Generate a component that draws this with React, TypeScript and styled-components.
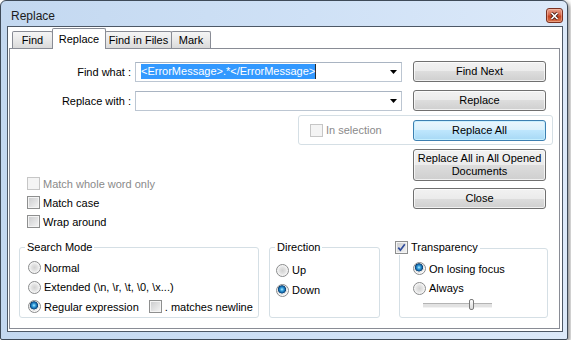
import React from "react";
import styled, { createGlobalStyle } from "styled-components";

const GlobalStyle = createGlobalStyle`
  html, body {
    margin: 0;
    padding: 0;
    background: #ffffff;
  }
  body {
    font-family: "Liberation Sans", Arial, sans-serif;
    font-size: 11px;
    color: #000000;
  }
  * {
    box-sizing: border-box;
  }
`;

const Window = styled.div`
  width: 568px;
  height: 340px;
  display: flex;
  flex-direction: column;
  padding: 0 4px 7px 6px;
  border: 1px solid #3e4a58;
  border-radius: 6px 6px 2px 2px;
  background: linear-gradient(to right, #c3d8f0 0%, #cfe1f6 55%, #dce9f9 100%);
  box-shadow: 2px 2px 4px rgba(0, 0, 0, 0.45);
`;

const TitleBar = styled.div`
  flex: none;
  height: 25px;
  display: flex;
  align-items: center;
  padding: 4px 0 0 4px;
  font-size: 12px;
  color: #1b1b1b;
`;

const CloseButton = styled.div`
  margin-left: auto;
  width: 17px;
  height: 15px;
  display: flex;
  align-items: center;
  justify-content: center;
  border: 1px solid #7a3122;
  border-radius: 3px;
  background: linear-gradient(#eaa48f 0%, #d6654a 45%, #c6421f 55%, #d9774f 100%);
  box-shadow: inset 0 0 0 1px rgba(255, 210, 190, 0.45);
`;

const Client = styled.div`
  flex: 1;
  display: flex;
  flex-direction: column;
  border: 1px solid #4d5866;
  background: #ffffff;
  padding: 0 2px 2px 1px;
`;

const TabStrip = styled.div`
  flex: none;
  height: 21px;
  display: flex;
  align-items: flex-end;
  padding-left: 3px;
`;

const Tab = styled.div<{ $active?: boolean; $w: number }>`
  position: relative;
  z-index: ${(p) => (p.$active ? 2 : 1)};
  width: ${(p) => p.$w}px;
  height: ${(p) => (p.$active ? 21 : 17)}px;
  margin-left: -1px;
  margin-bottom: ${(p) => (p.$active ? -1 : 0)}px;
  display: flex;
  align-items: center;
  justify-content: center;
  border: 1px solid #898c95;
  border-bottom: none;
  border-radius: 2px 2px 0 0;
  background: ${(p) =>
    p.$active
      ? "#ffffff"
      : "linear-gradient(#f5f5f5 0%, #e9e9e9 50%, #dadada 100%)"};
  &:first-child {
    margin-left: 0;
  }
`;

const Panel = styled.div`
  flex: 1;
  display: flex;
  flex-direction: column;
  border: 1px solid #898c95;
  background: #ffffff;
  padding: 0 13px 0 0;
`;

const FieldRow = styled.div<{ $top: number }>`
  display: flex;
  align-items: center;
  height: 21px;
  margin-top: ${(p) => p.$top}px;
`;

const FieldLabel = styled.div`
  flex: none;
  width: 121px;
  text-align: right;
`;

const Combo = styled.div`
  flex: none;
  width: 267px;
  height: 20px;
  margin-left: 4px;
  display: flex;
  align-items: center;
  padding: 0 4px 0 5px;
  border: 1px solid #bcc6d2;
  border-top-color: #a9b4c2;
  background: #ffffff;
`;

const Highlight = styled.span`
  height: 15px;
  line-height: 15px;
  background: #3399ff;
  color: #ffffff;
  border-right: 1px solid #2a2a2a;
`;

const Arrow = styled.svg`
  margin-left: auto;
  flex: none;
`;

const Button = styled.button<{ $default?: boolean; $h?: number; $push?: boolean }>`
  flex: none;
  width: 133px;
  height: ${(p) => p.$h ?? 21}px;
  margin-left: ${(p) => (p.$push ? "auto" : "0")};
  padding: 0 2px;
  font: inherit;
  line-height: 13px;
  color: #000000;
  border: 1px solid ${(p) => (p.$default ? "#3c7fb1" : "#707070")};
  border-radius: 3px;
  background: ${(p) =>
    p.$default
      ? "linear-gradient(#eaf6fd 0%, #d9f0fc 50%, #bee6fd 50%, #a7d9f5 100%)"
      : "linear-gradient(#f2f2f2 0%, #ebebeb 50%, #dddddd 50%, #cfcfcf 100%)"};
  box-shadow: inset 0 0 0 1px
    ${(p) => (p.$default ? "rgba(200, 240, 255, 0.9)" : "rgba(255, 255, 255, 0.7)")};
`;

const SelectionBox = styled.div`
  width: 255px;
  height: 30px;
  margin: 4px 0 0 288px;
  display: flex;
  align-items: center;
  justify-content: space-between;
  padding: 0 6px 0 11px;
  border: 1px solid #d5dfe5;
  border-radius: 3px;
`;

const MiddleRow = styled.div`
  display: flex;
  align-items: flex-start;
  margin-top: 4px;
`;

const Options = styled.div`
  display: flex;
  flex-direction: column;
  padding: 25px 0 0 17px;
`;

const SideButtons = styled.div`
  margin-left: auto;
  display: flex;
  flex-direction: column;
  gap: 7px;
`;

const OptionRow = styled.div<{ $disabled?: boolean; $h?: number }>`
  display: flex;
  align-items: center;
  gap: 3px;
  height: ${(p) => p.$h ?? 19}px;
  color: ${(p) => (p.$disabled ? "#8a8a8a" : "#000000")};
  white-space: nowrap;
`;

const Spacer = styled.span<{ $w: number }>`
  flex: none;
  width: ${(p) => p.$w}px;
`;

const Box = styled.span<{ $disabled?: boolean }>`
  flex: none;
  width: 13px;
  height: 13px;
  display: inline-flex;
  align-items: center;
  justify-content: center;
  border: 1px solid ${(p) => (p.$disabled ? "#c6c6c6" : "#8e8f8f")};
  background: ${(p) =>
    p.$disabled ? "#f4f4f4" : "linear-gradient(135deg, #c9cacc 0%, #f5f5f5 100%)"};
  box-shadow: inset 0 0 0 1px #f4f4f4;
`;

const Dot = styled.span<{ $on?: boolean }>`
  flex: none;
  width: 13px;
  height: 13px;
  border-radius: 50%;
  border: 1px solid #8a8b8c;
  background: ${(p) =>
    p.$on
      ? "radial-gradient(circle at 45% 40%, #b9eeff 0, #3ca6e2 1.5px, #115f9e 3.2px, #0b3f70 3.8px, #eeeeee 4.4px, #dedede 5px, #fafafa 5.6px)"
      : "radial-gradient(circle at 50% 50%, #d2d2d2 0, #e2e2e2 3px, #efefef 4.5px, #fafafa 5.6px)"};
`;

const BottomRow = styled.div`
  display: flex;
  align-items: flex-start;
  margin-top: 10px;
  padding-left: 9px;
`;

const Group = styled.fieldset<{ $w: number; $gap: number }>`
  flex: none;
  width: ${(p) => p.$w}px;
  min-width: 0;
  height: 77px;
  margin: 0 0 0 ${(p) => p.$gap}px;
  padding: 0;
  border: 1px solid #d5dfe5;
  border-radius: 3px;
`;

const Caption = styled.legend<{ $shift?: number }>`
  margin-left: ${(p) => p.$shift ?? 5}px;
  padding: 0 2px;
  line-height: 13px;
`;

const CaptionInner = styled.span`
  display: inline-flex;
  align-items: center;
  gap: 3px;
`;

const GroupBody = styled.div<{ $top: number; $left: number }>`
  display: flex;
  flex-direction: column;
  padding: ${(p) => p.$top}px 0 0 ${(p) => p.$left}px;
`;

const Slider = styled.div`
  position: relative;
  width: 69px;
  height: 11px;
  margin: 1px 0 0 10px;
  &::before {
    content: "";
    position: absolute;
    left: 0;
    right: 0;
    top: 4px;
    height: 3px;
    border-top: 1px solid #b4b4b4;
    border-bottom: 1px solid #f2f2f2;
    background: #e2e2e2;
  }
`;

const Thumb = styled.span`
  position: absolute;
  top: 0;
  width: 5px;
  height: 11px;
  border: 1px solid #7b7b7b;
  border-radius: 2px;
  background: linear-gradient(#ffffff, #d8d8d8);
`;

const CheckMark = () => (
  <svg width="9" height="9" viewBox="0 0 9 9">
    <path d="M1.3 4.6 L3.4 7.2 L7.8 1.2" fill="none" stroke="#2f4c9c" strokeWidth="1.7" />
  </svg>
);

const Checkbox = ({
  label,
  disabled,
  checked,
}: {
  label: string;
  disabled?: boolean;
  checked?: boolean;
}) => (
  <OptionRow $disabled={disabled}>
    <Box $disabled={disabled}>{checked && <CheckMark />}</Box>
    {label}
  </OptionRow>
);

const Radio = ({ label, on, h }: { label: React.ReactNode; on?: boolean; h?: number }) => (
  <OptionRow $h={h}>
    <Dot $on={on} />
    {label}
  </OptionRow>
);

const DropArrow = () => (
  <Arrow width="7" height="4" viewBox="0 0 7 4">
    <polygon points="0,0 7,0 3.5,4" fill="#000000" />
  </Arrow>
);

const App = () => {
  const sliderPos = 46;
  return (
    <>
      <GlobalStyle />
      <Window>
        <TitleBar>
          Replace
          <CloseButton>
            <svg width="9" height="8" viewBox="0 0 9 8" style={{ overflow: "visible" }}>
              <path d="M1.5 1 L7.5 7 M7.5 1 L1.5 7" stroke="#4a1a12" strokeWidth="3.2" />
              <path d="M1.5 1 L7.5 7 M7.5 1 L1.5 7" stroke="#ffffff" strokeWidth="1.7" />
            </svg>
          </CloseButton>
        </TitleBar>
        <Client>
          <TabStrip>
            <Tab $w={41}>Find</Tab>
            <Tab $w={54} $active>
              Replace
            </Tab>
            <Tab $w={67}>Find in Files</Tab>
            <Tab $w={40}>Mark</Tab>
          </TabStrip>
          <Panel>
            <FieldRow $top={12}>
              <FieldLabel>Find what :</FieldLabel>
              <Combo>
                <Highlight>&lt;ErrorMessage&gt;.*&lt;/ErrorMessage&gt;</Highlight>
                <DropArrow />
              </Combo>
              <Button $push>Find Next</Button>
            </FieldRow>
            <FieldRow $top={8}>
              <FieldLabel>Replace with :</FieldLabel>
              <Combo>
                <DropArrow />
              </Combo>
              <Button $push>Replace</Button>
            </FieldRow>
            <SelectionBox>
              <Checkbox label="In selection" disabled />
              <Button $default>Replace All</Button>
            </SelectionBox>
            <MiddleRow>
              <Options>
                <Checkbox label="Match whole word only" disabled />
                <Checkbox label="Match case" />
                <Checkbox label="Wrap around" />
              </Options>
              <SideButtons>
                <Button $h={32}>Replace All in All Opened Documents</Button>
                <Button>Close</Button>
              </SideButtons>
            </MiddleRow>
            <BottomRow>
              <Group $w={240} $gap={0}>
                <Caption>Search Mode</Caption>
                <GroupBody $top={4} $left={8}>
                  <Radio label="Normal" h={19.5} />
                  <Radio label="Extended (\n, \r, \t, \0, \x...)" h={19.5} />
                  <OptionRow $h={19.5}>
                    <Dot $on />
                    Regular expression
                    <Spacer $w={4} />
                    <Checkbox label=". matches newline" />
                  </OptionRow>
                </GroupBody>
              </Group>
              <Group $w={111} $gap={10}>
                <Caption>Direction</Caption>
                <GroupBody $top={6} $left={6}>
                  <Radio label="Up" h={20} />
                  <Radio label="Down" on h={20} />
                </GroupBody>
              </Group>
              <Group $w={149} $gap={19}>
                <Caption $shift={-7}>
                  <CaptionInner>
                    <Box>
                      <CheckMark />
                    </Box>
                    Transparency
                  </CaptionInner>
                </Caption>
                <GroupBody $top={4} $left={13}>
                  <Radio label="On losing focus" on h={19.5} />
                  <Radio label="Always" h={19.5} />
                  <Slider>
                    <Thumb style={{ left: sliderPos }} />
                  </Slider>
                </GroupBody>
              </Group>
            </BottomRow>
          </Panel>
        </Client>
      </Window>
    </>
  );
};

export default App;
